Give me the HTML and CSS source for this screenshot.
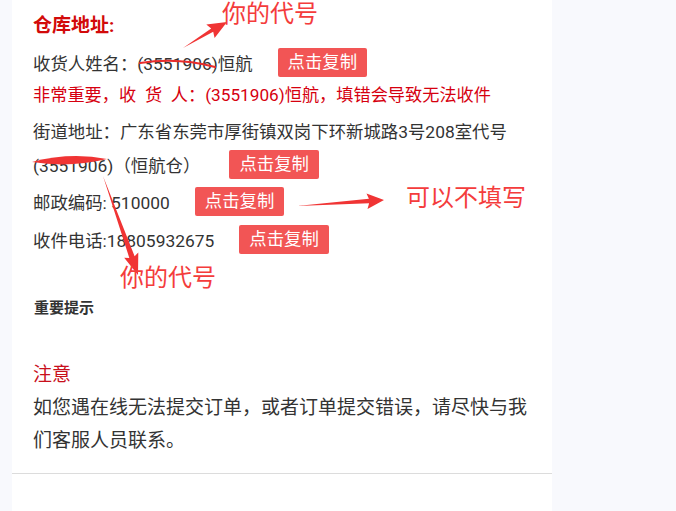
FILE: index.html
```html
<!DOCTYPE html>
<html lang="zh-CN">
<head>
  <meta charset="UTF-8">
  <meta name="viewport" content="width=device-width, initial-scale=1.0">
  <title>仓库地址</title>
  <link rel="stylesheet" href="styles.css">
</head>
<body>
  <div class="page">
    <div class="card">
      <h2 class="title">仓库地址:</h2>
      <div class="row">收货人姓名：(3551906)恒航<span class="copy-btn">点击复制</span></div>
      <p class="warn">非常重要，收&ensp;货&ensp;人：(3551906)恒航，填错会导致无法收件</p>
      <p class="street">街道地址：广东省东莞市厚街镇双岗下环新城路3号208室代号</p>
      <div class="row row-street">(3551906)（恒航仓）<span class="copy-btn">点击复制</span></div>
      <div class="row row-post">邮政编码: 510000<span class="copy-btn">点击复制</span></div>
      <div class="row row-phone">收件电话:18805932675<span class="copy-btn">点击复制</span></div>

      <h4 class="tip-title">重要提示</h4>

      <div class="notice">
        <h3>注意</h3>
        <p>如您遇在线无法提交订单，或者订单提交错误，请尽快与我们客服人员联系。</p>
      </div>
      <div class="card-foot"></div>
    </div>

    <!-- 标注：箭头和划线 -->
    <svg class="marks" viewBox="0 0 676 511" width="676" height="511">
      <path class="strike" d="M140,63 Q178,57 215,67" />
      <path class="mark" d="M32,162 Q70,152 107,159 Q70,168 32,162 Z" />
      <polygon class="mark" points="183,48 213.2,31.8 214.6,38 227,22 206.3,24.6 211.2,28.4" />
      <polygon class="mark" points="103,176 129.3,257.9 124.2,257.8 138,275 138.3,252.6 134.6,256.2" />
      <polygon class="mark" points="297,206 369.1,203.2 367.5,209 384,200 366.5,193.5 368.9,198.8" />
    </svg>
    <span class="note note-top">你的代号</span>
    <span class="note note-bottom">你的代号</span>
    <span class="note note-right">可以不填写</span>
  </div>
</body>
</html>
```

FILE: styles.css
```css
* {
  margin: 0;
  padding: 0;
  box-sizing: border-box;
}
body {
  font-family: Roboto, "Noto Sans CJK SC", sans-serif;
  background: #f8f9fd;
  color: #333;
  overflow: hidden;
}
.page {
  position: relative;
  width: 676px;
  height: 511px;
}
.card {
  width: 540px;
  margin-left: 12px;
  background: #fff;
  padding: 11px 0 0;
}
.card > * {
  margin-left: 21px;
  margin-right: 21px;
}
.title {
  font-size: 19px;
  font-weight: bold;
  line-height: 30px;
  color: #d20a0a;
  margin-bottom: 6px;
}
.row {
  display: flex;
  align-items: center;
  height: 30px;
  font-size: 17.4px;
  margin-bottom: 3px;
}
.copy-btn {
  display: inline-block;
  height: 29px;
  line-height: 29px;
  padding: 0 10px;
  margin-left: 25px;
  background: #f25555;
  color: #fff;
  border-radius: 2px;
  font-size: 17.4px;
}
.warn {
  font-size: 17.2px;
  line-height: 30px;
  color: #d6000f;
  margin-bottom: 7px;
}
.street {
  font-size: 17.4px;
  line-height: 31px;
  margin-bottom: 1px;
}
.row-street { margin-bottom: 7px; }
.row-street .copy-btn { margin-left: 29px; }
.row-post { margin-bottom: 8px; }
.tip-title {
  font-size: 15px;
  font-weight: bold;
  line-height: 20px;
  margin-top: 44px;
  margin-left: 22px;
}
.notice {
  margin-top: 42px;
  padding-bottom: 16px;
}
.notice h3 {
  font-size: 19px;
  font-weight: normal;
  line-height: 30px;
  color: #c8101c;
  margin-bottom: 1px;
}
.notice p {
  font-size: 19px;
  line-height: 33px;
}
.card-foot {
  margin: 0;
  border-top: 1px solid #dcdcdc;
  height: 60px;
}
.marks {
  position: absolute;
  left: 0;
  top: 0;
  pointer-events: none;
}
.marks .mark { fill: #f03434; }
.marks .strike {
  fill: none;
  stroke: #e82c2c;
  stroke-width: 2.2;
  stroke-linecap: round;
}
.note {
  position: absolute;
  font-size: 24px;
  line-height: 28px;
  color: #f43c3c;
  white-space: nowrap;
}
.note-top { left: 222px; top: 0; }
.note-bottom { left: 120px; top: 264px; }
.note-right { left: 406px; top: 184px; }
```
